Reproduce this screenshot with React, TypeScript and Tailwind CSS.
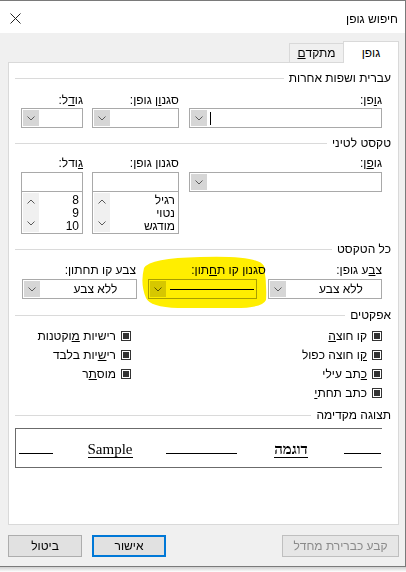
import React from 'react';

const Chevron = ({ up = false }: { up?: boolean }) => (
  <svg width="8" height="5" viewBox="0 0 8 5" className="block">
    <path d={up ? 'M0.5 4.5 L4 1 L7.5 4.5' : 'M0.5 0.5 L4 4 L7.5 0.5'} fill="none" stroke="#5a5a5a" strokeWidth="1" />
  </svg>
);

const Header = ({ title, className = '' }: { title: string; className?: string }) => (
  <div className={`flex h-[16px] items-center gap-[5px] pr-[7px] pl-[6px] ${className}`}>
    <span className="whitespace-nowrap">{title}</span>
    <div className="h-px flex-1 bg-[#dadada]" />
  </div>
);

const Combo = ({ className = '', value, caret = false }: { className?: string; value?: string; caret?: boolean }) => (
  <div className={`flex h-[20px] border border-[#a9a9a9] bg-white ${className}`}>
    <div className={`flex flex-1 items-center ${caret ? 'justify-end' : 'justify-center'}`}>
      {value && <span className="pl-[14px]">{value}</span>}
      {caret && <span className="ml-[2px] h-[13px] w-px bg-black" />}
    </div>
    <div className="m-px flex w-[16px] items-center justify-center bg-[#d6d6d6]">
      <Chevron />
    </div>
  </div>
);

const ListBox = ({ items, className = '' }: { items: string[]; className?: string }) => (
  <div className={`flex h-[42px] border border-t-0 border-[#a9a9a9] bg-white ${className}`}>
    <div className="flex-1 pt-[2px] pr-[3px] leading-[13px]">
      {items.map((i) => (
        <div key={i}>{i}</div>
      ))}
    </div>
    <div className="m-px flex w-[16px] flex-col items-center justify-between bg-[#f0f0f0] py-[6px]">
      <Chevron up />
      <Chevron />
    </div>
  </div>
);

const Check = ({ label }: { label: React.ReactNode }) => (
  <div className="flex h-[19px] items-center gap-[5px]">
    <span className="flex h-[10px] w-[10px] items-center justify-center border border-[#333]">
      <span className="h-[6px] w-[6px] bg-[#333]" />
    </span>
    <span>{label}</span>
  </div>
);

const Btn = ({ children, className = '' }: { children: React.ReactNode; className?: string }) => (
  <div className={`flex h-[22px] items-center justify-center bg-[#e1e1e1] ${className}`}>{children}</div>
);

export default function App() {
  return (
    <div className="relative h-[572px] w-[406px] overflow-hidden bg-white font-['Liberation_Sans',sans-serif] text-[12px] text-black">
      <div dir="rtl" className="flex h-[567px] w-[406px] flex-col border-t border-r border-b border-[#7a7a7a]">
        {/* title bar */}
        <div className="flex h-[32px] items-center justify-between bg-white pr-[7px] pl-[10px]">
          <span className="pt-[4px]">חיפוש גופן</span>
          <svg width="11" height="11" viewBox="0 0 11 11" className="mt-[2px]">
            <path d="M0.5 0.5 L10.5 10.5 M10.5 0.5 L0.5 10.5" stroke="#222" strokeWidth="1" />
          </svg>
        </div>

        <div className="flex flex-1 flex-col bg-[#f0f0f0] pr-[6px] pl-[8px]">
          {/* tabs */}
          <div className="mt-[8px] flex h-[21px] items-end">
            <div className="relative z-10 -mb-px flex h-[22px] w-[56px] items-center justify-center border border-b-0 border-[#d9d9d9] bg-white">
              גופן
            </div>
            <div className="flex h-[19px] w-[54px] items-center justify-center border border-r-0 border-b-0 border-[#d9d9d9] bg-[#f0f0f0]">
              מתקד<u>ם</u>
            </div>
          </div>

          {/* panel */}
          <div className="flex h-[463px] w-[391px] flex-col border border-[#d9d9d9] bg-white">
            <Header title="עברית ושפות אחרות" className="mt-[7px]" />
            <div className="mt-[7px] flex gap-[10px] pr-[16px]">
              <div className="w-[193px]">
                <div className="h-[14px] leading-[14px]">ג<u>ו</u>פן:</div>
                <Combo className="mt-px" caret />
              </div>
              <div className="flex gap-[9px]">
                <div className="w-[87px]">
                  <div className="h-[14px] leading-[14px]">סגנ<u>ו</u>ן גופן:</div>
                  <Combo className="mt-px" />
                </div>
                <div className="w-[62px]">
                  <div className="h-[14px] leading-[14px]">גו<u>ד</u>ל:</div>
                  <Combo className="mt-px" />
                </div>
              </div>
            </div>

            <Header title="טקסט לטיני" className="mt-[7px]" />
            <div className="mt-[5px] flex gap-[10px] pr-[16px]">
              <div className="w-[193px]">
                <div className="h-[14px] leading-[14px]">גו<u>פ</u>ן:</div>
                <Combo className="mt-[2px]" />
              </div>
              <div className="flex gap-[9px]">
                <div className="w-[87px]">
                  <div className="h-[14px] leading-[14px]">סגנון גופן:</div>
                  <div className="mt-[2px] h-[20px] border border-[#a9a9a9] bg-white" />
                  <ListBox items={['רגיל', 'נטוי', 'מודגש']} />
                </div>
                <div className="w-[62px]">
                  <div className="h-[14px] leading-[14px]"><u>ג</u>ודל:</div>
                  <div className="mt-[2px] h-[20px] border border-[#a9a9a9] bg-white" />
                  <ListBox items={['8', '9', '10']} />
                </div>
              </div>
            </div>

            <Header title="כל הטקסט" className="mt-[7px]" />
            <div className="mt-[6px] flex h-[14px] pr-[16px] leading-[14px]">
              <div className="w-[114px]">צ<u>ב</u>ע גופן:</div>
              <div className="mr-[2px] w-[119px]">סגנון קו ת<u>ח</u>תון:</div>
              <div className="mr-[11px] w-[115px]">צבע קו תחתון:</div>
            </div>
            <div className="mt-[2px] flex gap-[11px] pr-[16px]">
              <Combo className="w-[114px]" value="ללא צבע" />
              <div className="flex h-[20px] w-[109px] border border-[#a9a9a9] bg-white">
                <div className="flex flex-1 items-center justify-center">
                  <div className="h-px w-[84px] bg-black" />
                </div>
                <div className="m-px flex w-[16px] items-center justify-center bg-[#d6d6d6]">
                  <Chevron />
                </div>
              </div>
              <Combo className="w-[115px]" value="ללא צבע" />
            </div>

            <Header title="אפקטים" className="mt-[8px]" />
            <div className="mt-[3px] flex pr-[16px]">
              <div className="flex w-[251px] flex-col">
                <Check label={<>קו חוצ<u>ה</u></>} />
                <Check label={<><u>ק</u>ו חוצה כפול</>} />
                <Check label={<><u>כ</u>תב עילי</>} />
                <Check label={<>כתב תחת<u>י</u></>} />
              </div>
              <div className="flex flex-col">
                <Check label={<>רישיות <u>מ</u>וקטנות</>} />
                <Check label={<>רי<u>ש</u>יות בלבד</>} />
                <Check label={<>מוס<u>ת</u>ר</>} />
              </div>
            </div>

            <Header title="תצוגה מקדימה" className="mt-[5px]" />
            <div className="mt-[5px] mr-[16px] ml-[6px] flex h-[40px] items-end border border-l border-r-0 border-[#6b6b6b] bg-white pb-[9px] font-['Liberation_Serif',serif] text-[15px]">
              <div className="mr-px mb-[4px] h-px w-[37px] bg-black" />
              <div className="w-[36px]" />
              <div className="flex w-[34px] justify-center leading-[17px]">
                <span className="border-b border-black whitespace-nowrap font-bold leading-[16px]">דוגמה</span>
              </div>
              <div className="w-[37px]" />
              <div className="mb-[4px] h-px w-[71px] bg-black" />
              <div className="w-[34px]" />
              <div className="flex w-[44px] justify-center">
                <span dir="ltr" className="border-b border-black whitespace-nowrap leading-[16px]">Sample</span>
              </div>
              <div className="w-[35px]" />
              <div className="mb-[4px] h-px w-[34px] bg-black" />
            </div>
          </div>

          {/* buttons */}
          <div className="mt-[10px] flex items-center justify-between pl-[-1px]">
            <Btn className="w-[117px] border border-[#bfbfbf] bg-[#e6e6e6] text-[#8a8a8a]">קבע כברירת מחדל</Btn>
            <div className="flex gap-[10px]">
              <Btn className="w-[74px] border-2 border-[#0078d7]">אישור</Btn>
              <Btn className="w-[74px] border border-[#adadad]">ביטול</Btn>
            </div>
          </div>
        </div>
      </div>
      <div className="h-[5px] w-[406px] bg-gradient-to-b from-[#cfcfcf] to-white" />

      {/* highlighter mark */}
      <svg width="406" height="572" className="pointer-events-none absolute top-0 left-0 mix-blend-multiply">
        <path
          d="M144 268 Q150 258 200 257 Q258 255 264 266 Q267 285 266 300 Q262 309 228 308 L178 308 Q150 307 146 298 Q140 284 144 268 Z"
          fill="#ffee00"
        />
      </svg>
    </div>
  );
}
